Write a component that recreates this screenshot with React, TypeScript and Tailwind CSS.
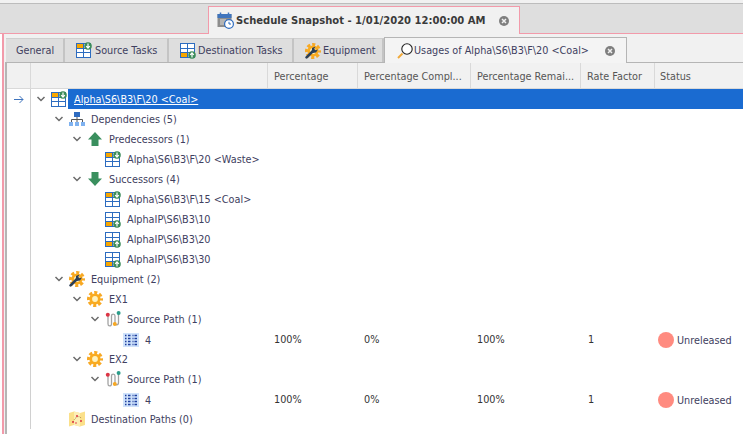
import React from 'react';

type IconName = 'taskDown' | 'taskUp' | 'tree' | 'arrowUp' | 'arrowDown' | 'wrench' | 'gear' | 'path' | 'list' | 'map';

interface Row {
  level: 0 | 1 | 2 | 3 | 4;
  icon: IconName;
  label: string;
  open?: boolean;
  values?: boolean;
}

const rows: Row[] = [
  { level: 1, icon: 'tree', label: 'Dependencies (5)', open: true },
  { level: 2, icon: 'arrowUp', label: 'Predecessors (1)', open: true },
  { level: 3, icon: 'taskDown', label: 'Alpha\\S6\\B3\\F\\20 <Waste>' },
  { level: 2, icon: 'arrowDown', label: 'Successors (4)', open: true },
  { level: 3, icon: 'taskDown', label: 'Alpha\\S6\\B3\\F\\15 <Coal>' },
  { level: 3, icon: 'taskUp', label: 'AlphaIP\\S6\\B3\\10' },
  { level: 3, icon: 'taskUp', label: 'AlphaIP\\S6\\B3\\20' },
  { level: 3, icon: 'taskUp', label: 'AlphaIP\\S6\\B3\\30' },
  { level: 1, icon: 'wrench', label: 'Equipment (2)', open: true },
  { level: 2, icon: 'gear', label: 'EX1', open: true },
  { level: 3, icon: 'path', label: 'Source Path (1)', open: true },
  { level: 4, icon: 'list', label: '4', values: true },
  { level: 2, icon: 'gear', label: 'EX2', open: true },
  { level: 3, icon: 'path', label: 'Source Path (1)', open: true },
  { level: 4, icon: 'list', label: '4', values: true },
  { level: 1, icon: 'map', label: 'Destination Paths (0)' },
];

const indent = ['pl-[5px]', 'pl-[23px]', 'pl-[41px]', 'pl-[59px]', 'pl-[77px]'];
const columns = 'grid grid-cols-[24px_237px_90px_113px_110px_74px_88px]';

function TaskIcon({ up }: { up?: boolean }) {
  return (
    <svg width="16" height="17" viewBox="0 0 16 17" className="shrink-0">
      <rect x="0.5" y="1.5" width="14" height="14" fill="#fff" stroke="#2d6cc0" />
      <rect x="1" y={up ? 11 : 2} width="6" height="4" fill="#f7a600" />
      <path d="M0.5 6.5H14.5M0.5 10.5H14.5M7.5 1.5V15.5" stroke="#2d6cc0" fill="none" />
      <circle cx="12" cy={up ? 13 : 4} r="3.8" fill="#3c8c5a" />
      {up ? (
        <path d="M12 15.5V11M10.2 12.8L12 10.8L13.8 12.8" stroke="#fff" fill="none" strokeWidth="1.2" />
      ) : (
        <path d="M12 1.5V6M10.2 4.2L12 6.2L13.8 4.2" stroke="#fff" fill="none" strokeWidth="1.2" />
      )}
    </svg>
  );
}

function GearIcon({ wrench }: { wrench?: boolean }) {
  return (
    <svg width="16" height="16" viewBox="0 0 16 16" className="shrink-0">
      <circle cx="8" cy="8" r="6.5" fill="none" stroke="#f7a823" strokeWidth="3" strokeDasharray="3.1 2" strokeDashoffset="1.55" />
      <circle cx="8" cy="8" r="5.6" fill="#f9ab20" />
      <circle cx="8" cy="8" r="2.9" fill="#fff2bd" />
      {wrench && (
        <>
          <path d="M1.6 14.4L8 8" stroke="#2c3f57" strokeWidth="2.6" strokeLinecap="round" />
          <path d="M6.8 8.8L7 5L10.4 3.4L9.2 6L10.8 7.2L13 6.4L11 9.4L7.6 10Z" fill="#2c3f57" />
        </>
      )}
    </svg>
  );
}

function TreeIcon({ name }: { name: IconName }) {
  switch (name) {
    case 'taskDown':
      return <TaskIcon />;
    case 'taskUp':
      return <TaskIcon up />;
    case 'tree':
      return (
        <svg width="16" height="16" viewBox="0 0 16 16" className="shrink-0">
          <rect x="5" y="1" width="6" height="5" fill="#2f6cc0" />
          <path d="M8 6V9M2.5 11V8.5H13.5V11M8 9V11" stroke="#555" fill="none" />
          <rect x="0" y="11" width="4" height="4" fill="#7fb2f0" />
          <rect x="6" y="11" width="4" height="4" fill="#7fb2f0" />
          <rect x="12" y="11" width="4" height="4" fill="#7fb2f0" />
        </svg>
      );
    case 'arrowUp':
      return (
        <svg width="16" height="16" viewBox="0 0 16 16" className="shrink-0">
          <path d="M8 1L15 8.5H11.5V15H4.5V8.5H1Z" fill="#3a8f5e" />
        </svg>
      );
    case 'arrowDown':
      return (
        <svg width="16" height="16" viewBox="0 0 16 16" className="shrink-0">
          <path d="M8 15L15 7.5H11.5V1H4.5V7.5H1Z" fill="#3a8f5e" />
        </svg>
      );
    case 'wrench':
      return <GearIcon wrench />;
    case 'gear':
      return <GearIcon />;
    case 'path':
      return (
        <svg width="16" height="16" viewBox="0 0 16 16" className="shrink-0">
          <path d="M3 5V13C3 15.5 6.5 15.5 6.5 13V5C6.5 2.5 10 2.5 10 5V11.5C10 14.5 13.5 14.5 13.5 11.5V3" stroke="#a3a3a3" strokeWidth="1.3" fill="none" />
          <circle cx="2.8" cy="3.8" r="2" fill="#dc3545" />
          <circle cx="13.6" cy="2" r="2" fill="#2a9d8a" />
          <circle cx="9.8" cy="13" r="2" fill="#f7a823" />
        </svg>
      );
    case 'list':
      return (
        <svg width="16" height="14" viewBox="0 0 16 14" className="shrink-0">
          <rect width="16" height="14" fill="#cfe2fb" />
          <path d="M2 2.5H3.5M5 2.5H7.5M9.5 2.5H10.5M11.5 2.5H14M2 5.5H3.5M5 5.5H7.5M9.5 5.5H10.5M11.5 5.5H14M2 8.5H3.5M5 8.5H7.5M9.5 8.5H10.5M11.5 8.5H14M2 11.5H3.5M5 11.5H7.5M9.5 11.5H10.5M11.5 11.5H14" stroke="#1f3f9e" strokeWidth="1.4" fill="none" />
        </svg>
      );
    case 'map':
      return (
        <svg width="16" height="16" viewBox="0 0 16 16" className="shrink-0">
          <path d="M0 2L5 0.5L11 2L16 0.5V14L11 15.5L5 14L0 15.5Z" fill="#fbe08a" />
          <path d="M5 0.5L11 2V15.5L5 14Z" fill="#fdeeb5" />
          <path d="M4 11C6 6 10 4 12 7" stroke="#b08a4a" strokeDasharray="1 1" fill="none" />
          <circle cx="4" cy="11" r="1" fill="#dc3545" />
          <circle cx="8" cy="5" r="1" fill="#dc3545" />
          <circle cx="12" cy="10" r="1" fill="#dc3545" />
          <circle cx="7" cy="12" r="0.8" fill="#dc3545" />
        </svg>
      );
  }
}

function Chevron() {
  return (
    <svg width="10" height="6" viewBox="0 0 10 6" className="shrink-0">
      <path d="M1.5 1L5 4.5L8.5 1" stroke="#6b6b6b" strokeWidth="1.5" fill="none" />
    </svg>
  );
}

function CloseIcon() {
  return (
    <svg width="10" height="10" viewBox="0 0 10 10" className="shrink-0">
      <circle cx="5" cy="5" r="5" fill="#7f7f7f" />
      <path d="M3 3L7 7M7 3L3 7" stroke="#f1f1f1" strokeWidth="1.5" />
    </svg>
  );
}

function CalendarIcon() {
  return (
    <svg width="17" height="17" viewBox="0 0 17 17" className="shrink-0">
      <rect x="0.5" y="2" width="14" height="13" fill="#8d8d8d" />
      <rect x="0.5" y="2" width="14" height="4" fill="#3f74bd" />
      <path d="M3.5 0.5V3M11.5 0.5V3" stroke="#3f74bd" strokeWidth="1.5" />
      <path d="M3 8H9M3 10H8M3 12H7" stroke="#dcdcdc" />
      <circle cx="12" cy="12" r="4.4" fill="#fff" stroke="#2d6cc0" strokeWidth="1.2" />
      <path d="M12 9.8V12H14" stroke="#2d6cc0" fill="none" />
    </svg>
  );
}

function SearchIcon() {
  return (
    <svg width="16" height="16" viewBox="0 0 16 16" className="shrink-0">
      <path d="M1 15L5.5 10.5" stroke="#f0a93a" strokeWidth="2" />
      <circle cx="10" cy="6" r="5.2" fill="#fff" stroke="#222" strokeWidth="1.1" />
    </svg>
  );
}

function DocTab({ className, icon, label }: { className: string; icon?: React.ReactNode; label: string }) {
  return (
    <div className={`flex items-center h-[24px] whitespace-nowrap bg-[#dedede] border-r-2 border-r-[#c4c4c4] border-t border-t-[#cfcfcf] ${className}`}>
      {icon}
      <span>{label}</span>
    </div>
  );
}

function Values() {
  return (
    <>
      <div className="pl-[6px] text-[#333] leading-[22px]">100%</div>
      <div className="pl-[6px] text-[#333] leading-[22px]">0%</div>
      <div className="pl-[6px] text-[#333] leading-[22px]">100%</div>
      <div className="pl-[7px] text-[#333] leading-[22px]">1</div>
      <div className="pl-[3px] flex items-center gap-[3px]">
        <span className="w-4 h-4 rounded-full bg-[#ff8b80] shrink-0" />
        <span className="h-5 leading-[22px] text-[#404060]">Unreleased</span>
      </div>
    </>
  );
}

export default function App() {
  return (
    <div className="w-[743px] h-[434px] overflow-hidden bg-white text-[9.7px] leading-5 text-[#404060] font-['DejaVu_Sans',sans-serif]">
      {/* document tab strip */}
      <div className="h-[34px] pt-[3px] bg-[#f1f1f1]">
        <div className="h-[31px] bg-[#dedede] border-t border-t-[#bcbcbc] border-b border-b-[#f29aaa] pl-[208px] pt-[2px]">
          <div className="w-[312px] h-[28px] flex items-center bg-[#f1f1f1] border border-b-0 border-[#f29aaa] pl-[8px]">
            <CalendarIcon />
            <span className="ml-[2px] font-bold text-[#3a3a3a] text-[10px] whitespace-nowrap">
              Schedule Snapshot - 1/01/2020 12:00:00 AM
            </span>
            <span className="ml-auto mr-[10px]"><CloseIcon /></span>
          </div>
        </div>
      </div>

      <div className="ml-[2px] h-[400px] border-l-2 border-l-[#f29aaa] bg-[#f1f1f1] pl-[1px]">
        {/* inner tabs */}
        <div className="h-[28px] pt-[3px] flex items-end">
          <DocTab className="w-[59px] pl-[10px] ml-[1px]" label="General" />
          <DocTab className="w-[104px] pl-[11px] gap-[3px]" icon={<TaskIcon />} label="Source Tasks" />
          <DocTab className="w-[125px] pl-[11px] gap-[2px]" icon={<TaskIcon up />} label="Destination Tasks" />
          <DocTab className="w-[90px] pl-[11px] gap-[2px]" icon={<GearIcon wrench />} label="Equipment" />
          <div className="w-[243px] h-[26px] -mb-[1px] flex items-center whitespace-nowrap bg-[#f4f4f4] border border-b-0 border-[#b5b5b5] pl-[12px] relative z-10">
            <SearchIcon />
            <span className="ml-[1px]">{'Usages of Alpha\\S6\\B3\\F\\20 <Coal>'}</span>
            <span className="ml-auto mr-[11px]"><CloseIcon /></span>
          </div>
        </div>

        {/* grid */}
        <div className="h-[372px] border-l-2 border-l-[#b5b5b5] border-t border-t-[#b5b5b5] bg-white">
          <div className={`${columns} h-[26px] bg-[#f1f1f1] border-b border-b-[#d9d9d9] text-[#555] whitespace-nowrap`}>
            <div className="border-r border-r-[#d9d9d9]" />
            <div className="border-r border-r-[#d9d9d9]" />
            <div className="border-r border-r-[#d9d9d9] pl-[6px] leading-[27px]">Percentage</div>
            <div className="border-r border-r-[#d9d9d9] pl-[6px] leading-[27px]">Percentage Compl...</div>
            <div className="border-r border-r-[#d9d9d9] pl-[6px] leading-[27px]">Percentage Remai...</div>
            <div className="border-r border-r-[#d9d9d9] pl-[6px] leading-[27px]">Rate Factor</div>
            <div className="pl-[5px] leading-[27px]">Status</div>
          </div>

          {/* selected root row */}
          <div className={`${columns} h-5`}>
            <div className="flex items-center pl-[7px] border-r border-r-[#d0d0d0]">
              <svg width="10" height="9" viewBox="0 0 10 9">
                <path d="M0 4.5H9M5.5 1L9 4.5L5.5 8" stroke="#3f74bd" fill="none" />
              </svg>
            </div>
            <div className={`flex items-center ${indent[0]}`}>
              <span className="w-[10px] flex justify-center"><Chevron /></span>
              <span className="ml-[5px]"><TaskIcon /></span>
              <span className="ml-px flex-1 h-5 bg-[#1a6bd1] pl-[6px] leading-[22px] text-white underline whitespace-nowrap">
                {'Alpha\\S6\\B3\\F\\20 <Coal>'}
              </span>
            </div>
            <div className="col-span-5 bg-[#1a6bd1]" />
          </div>

          {rows.map((row, i) => (
            <div key={i} className={`${columns} h-5`}>
              <div className="border-r border-r-[#d0d0d0]" />
              <div className={`flex items-center whitespace-nowrap ${indent[row.level]}`}>
                <span className="w-[10px] flex justify-center">{row.open && <Chevron />}</span>
                <span className="ml-[5px] w-4 flex justify-center"><TreeIcon name={row.icon} /></span>
                <span className="ml-[6px] h-5 leading-[22px]">{row.label}</span>
              </div>
              {row.values && <Values />}
            </div>
          ))}
        </div>
      </div>
    </div>
  );
}
